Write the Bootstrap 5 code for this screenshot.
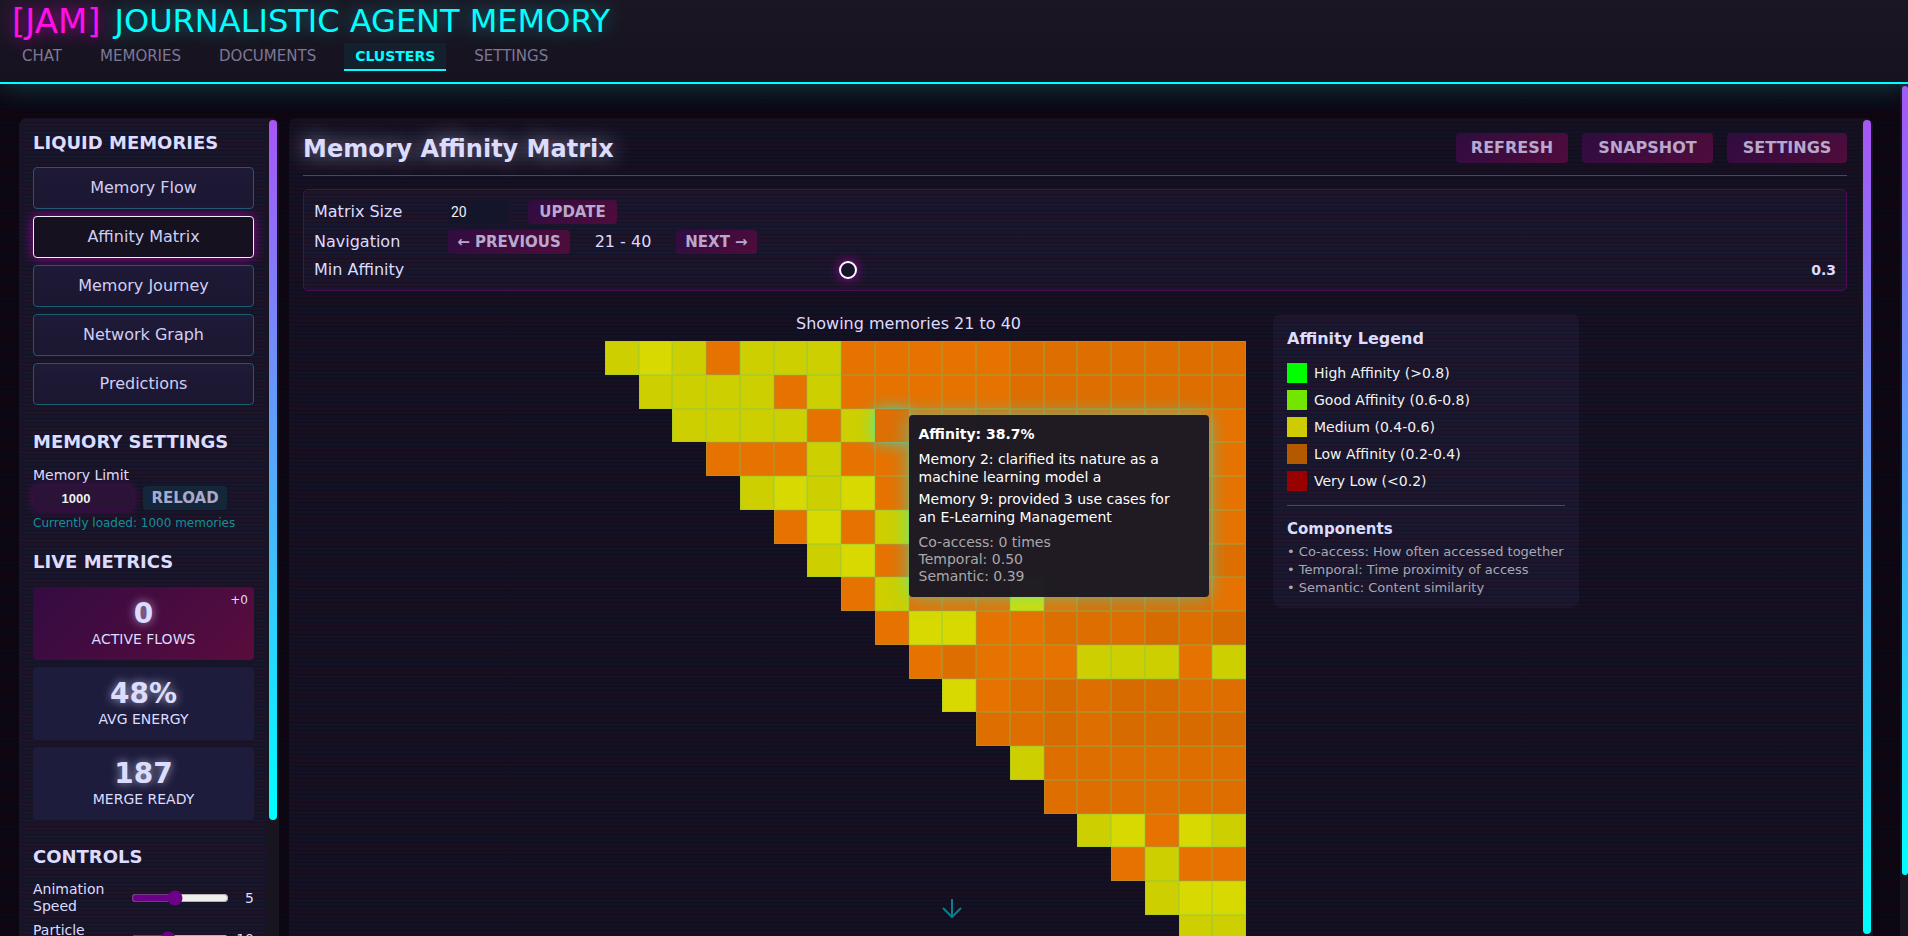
<!DOCTYPE html>
<html lang="en">
<head>
<meta charset="utf-8">
<meta name="viewport" content="width=device-width, initial-scale=1">
<title>JAM - Journalistic Agent Memory</title>
<link href="https://cdn.jsdelivr.net/npm/bootstrap@5.3.0/dist/css/bootstrap.min.css" rel="stylesheet">
<style>
:root{--cyan:#00ffff;--ink:#dcdcff;--teal:#175f70}
body{font-family:"DejaVu Sans",Verdana,sans-serif;font-size:16px;line-height:18px;color:var(--ink);background-color:#0c0612}
body,.side-panel,.main-panel,.filters,.legend-card{background-image:repeating-linear-gradient(180deg,rgba(0,0,0,.18) 0 1px,transparent 1px 4px),repeating-linear-gradient(180deg,rgba(70,0,20,.07) 0 9px,rgba(0,30,60,.07) 13px 22px)}
.app{height:100vh}
.topbar{height:84px;background:linear-gradient(180deg,#1a1723,#161220);border-bottom:2px solid var(--cyan);box-shadow:0 0 30px rgba(0,255,255,.28);padding:5px 12px 0;position:relative;z-index:2}
.brand{font-size:32px;line-height:32px;margin:0;color:var(--cyan);text-shadow:0 0 18px rgba(0,255,255,.45);gap:14px}
.brand b{font-size:34px;font-weight:400;color:#ff10e8;text-shadow:0 0 18px rgba(255,0,230,.75)}
.topnav{gap:18px;margin-top:6px}
.topnav .nav-link{font-size:15px;line-height:26px;height:28px;padding:0 10px;color:#7d7897;border-bottom:2px solid transparent}
.topnav .nav-link.active{color:var(--cyan);background:#13202e;border-color:var(--cyan);font-size:14px;font-weight:700;padding:0 11px}
.stage-area{padding:34px 27px 0 19px;gap:10px}
.side-panel{width:260px;background-color:#19152b;border-radius:8px 8px 0 0}
.side-body{padding:14px 13px 0 14px;min-width:0}
.main-panel{background-color:#141023;border-radius:8px 8px 0 0}
.main-body{padding:14px}
.rail{width:12px;padding:2px;background:#19151f;border-radius:6px 6px 0 0}
.rail-page{width:8px;padding-right:0;border-radius:0;position:relative;z-index:1}
.thumb{border-radius:4px;background:linear-gradient(180deg,#a855f7,var(--cyan))}
.side-title{font-size:18px;line-height:22px;margin:0}
.sec{margin-top:26px}
.sec-2{margin-top:19px}
.views{gap:7px;margin-top:13px}
.view-btn{height:42px;border:1px solid var(--teal);border-radius:4px;background:linear-gradient(180deg,#1e1a37,#1b1731);color:#d0cef2;padding:0}
.view-btn.active{background:#15111f;border-color:#f0eeff;box-shadow:0 0 12px rgba(190,0,190,.75)}
.limit-label{margin-top:13px;font-size:14px}
.limit-row{gap:10px;margin:2px 0 4px}
.limit-input{width:100px;height:24px;border:0;border-radius:4px;background:#2a1336;box-shadow:0 0 8px rgba(140,0,140,.6);color:#eee;font:bold 13px "Liberation Sans",Arial,sans-serif;text-align:center;padding:0 14px 0 0}
.plain{appearance:textfield;-moz-appearance:textfield}
.plain::-webkit-inner-spin-button{display:none}
.neon-btn{height:24px;border:0;border-radius:4px;padding:0;font-size:15px;line-height:18px;font-weight:700;color:#b9a8cd;background:linear-gradient(135deg,#300c40,#4f0c3c)}
.neon-btn.tall{height:30px;font-size:16px}
.reload-btn{width:84px;background:#14263a;color:#a9a9cb}
.note{font-size:12px;color:#138f99}
.metrics{gap:7px;margin-top:14px}
.metric{height:73px;border-radius:4px;background:#1e1c3c;position:relative;text-align:center;padding-top:12px}
.metric.hot{background:linear-gradient(135deg,#340b42,#5a0c3d)}
.metric strong{display:block;font-size:28px;line-height:30px;text-shadow:0 0 10px rgba(220,220,255,.7)}
.metric span{font-size:14px;line-height:20px}
.metric .delta{position:absolute;right:6px;top:3px;font-size:12px}
.ctl-list{gap:7px;margin-top:13px}
.ctl{gap:6px}
.ctl label{width:92px;font-size:14px;line-height:17px}
.ctl input{width:98px;accent-color:#6c0088;margin:0}
.ctl span{font-size:14px}
.panel-head{border-bottom:1px solid var(--teal);height:44px}
.panel-title{font-size:24px;line-height:34px;text-shadow:0 0 20px rgba(220,220,255,.65)}
.head-btns{gap:14px;margin-top:1px}
.w-refresh{width:112px}
.w-snapshot{width:131px}
.w-settings{width:120px}
.filters{border:1px solid #4b0c58;border-radius:5px;background-color:#1a162d;margin-top:13px;padding:10px;height:102px;gap:6px}
.filters .lbl{width:134px}
.filters b{font-size:14px}
.size-input{width:60px;height:24px;border:0;background:#14142a;color:#eee;font:14px Roboto,sans-serif;padding:0 3px}
.upd{width:89px;margin-left:20px}
.prev{width:122px}
.next{width:81px}
.range-text{width:106px;text-align:center}
.ghost{appearance:none;width:97%;height:20px;margin:0;background:transparent}
.ghost::-webkit-slider-thumb{appearance:none;width:18px;height:18px;border-radius:50%;border:2px solid #fff;background:#17132a;box-shadow:0 0 12px rgba(200,0,200,.8)}
.matrix-row{gap:27px;margin-top:23px}
.showing{line-height:20px;margin-bottom:7px}
.matrix{width:675px;display:grid;grid-template-columns:repeat(20,1fr)}
.cell{aspect-ratio:1;position:relative;border:1px solid rgba(110,200,110,.3)}
.void{aspect-ratio:1}
.Y{background-color:#cdcf00}.y{background-color:#d7d900}
.O{background-color:#e67200}.P{background-color:#de6e00}.Q{background-color:#d86b00}
.hovered{border:0;box-shadow:0 0 16px rgba(0,255,255,.7);z-index:3;background-color:#de6f04}
.tip{position:absolute;left:100%;top:6px;width:300px;height:182px;border-radius:4px;background:rgba(28,24,36,.98);box-shadow:0 0 20px rgba(0,255,255,.5);padding:10px;color:#fff;font-size:14px;line-height:18px}
.tip p{margin:0 0 4px}
.tip .tip-head{font-weight:700;margin-bottom:7px}
.tip .dim{color:#aaa8ad;line-height:17px;margin-top:8px}
.legend-card{width:306px;background-color:#1b1730;border-radius:8px;padding:14px;height:294px}
.legend-card h3{font-size:16px;line-height:22px;margin:0 0 13px}
.legend-card h4{font-size:15px;line-height:20px;margin:13px 0 4px}
.swatches{gap:7px}
.key{gap:7px;color:#f2f2f2;font-size:14px;line-height:20px}
.sw{width:20px;height:20px}
.sw-high{background:#00ff00}.sw-good{background:#73e600}.sw-medium{background:#cccc00}.sw-low{background:#b35900}.sw-verylow{background:#990000}
.comp{border-top:1px solid var(--teal);margin-top:14px}
.comp li{font-size:13px;line-height:18px;color:#a9a7b2}
.go-down{position:fixed;left:0;right:4px;bottom:16px;z-index:4;pointer-events:none}
</style>
</head>
<body class="overflow-hidden">
<div class="app d-flex flex-column text-nowrap">
  <header class="topbar flex-shrink-0">
    <h1 class="brand d-flex"><b>[JAM]</b> JOURNALISTIC AGENT MEMORY</h1>
    <nav class="topnav nav">
      <a class="nav-link" href="#">CHAT</a>
      <a class="nav-link" href="#">MEMORIES</a>
      <a class="nav-link" href="#">DOCUMENTS</a>
      <a class="nav-link active" href="#">CLUSTERS</a>
      <a class="nav-link" href="#">SETTINGS</a>
    </nav>
  </header>
  <div class="d-flex flex-grow-1 overflow-hidden">
    <div class="stage-area d-flex flex-grow-1 overflow-hidden">
      <aside class="side-panel d-flex flex-shrink-0 overflow-hidden">
        <div class="side-body flex-grow-1">
          <h2 class="side-title fw-bold">LIQUID MEMORIES</h2>
          <div class="d-grid views">
            <button class="view-btn">Memory Flow</button>
            <button class="view-btn active">Affinity Matrix</button>
            <button class="view-btn">Memory Journey</button>
            <button class="view-btn">Network Graph</button>
            <button class="view-btn">Predictions</button>
          </div>
          <h2 class="side-title fw-bold sec">MEMORY SETTINGS</h2>
          <label class="d-block limit-label" for="limit">Memory Limit</label>
          <div class="d-flex limit-row">
            <input id="limit" class="limit-input plain" type="number" value="1000">
            <button class="neon-btn reload-btn">RELOAD</button>
          </div>
          <div class="note">Currently loaded: 1000 memories</div>
          <h2 class="side-title fw-bold sec-2">LIVE METRICS</h2>
          <div class="d-grid metrics">
            <div class="metric hot"><strong>0</strong><span>ACTIVE FLOWS</span><span class="delta">+0</span></div>
            <div class="metric"><strong>48%</strong><span>AVG ENERGY</span></div>
            <div class="metric"><strong>187</strong><span>MERGE READY</span></div>
          </div>
          <h2 class="side-title fw-bold sec">CONTROLS</h2>
          <div class="ctl-list d-grid">
            <div class="ctl d-flex align-items-center"><label for="speed">Animation<br>Speed</label><input id="speed" type="range" min="1" max="10" value="5"><span class="ms-auto">5</span></div>
            <div class="ctl d-flex align-items-center"><label for="count">Particle<br>Count</label><input id="count" type="range" min="0" max="28" value="10"><span class="ms-auto">10</span></div>
          </div>
        </div>
        <div class="rail flex-shrink-0"><div class="thumb" style="height:86%"></div></div>
      </aside>
      <main class="main-panel d-flex flex-grow-1 overflow-hidden">
        <div class="main-body flex-grow-1">
          <div class="panel-head d-flex justify-content-between align-items-start">
            <h2 class="panel-title fw-bold m-0">Memory Affinity Matrix</h2>
            <div class="d-flex head-btns">
              <button class="neon-btn tall w-refresh">REFRESH</button>
              <button class="neon-btn tall w-snapshot">SNAPSHOT</button>
              <button class="neon-btn tall w-settings">SETTINGS</button>
            </div>
          </div>
          <section class="filters d-flex flex-column">
            <div class="d-flex align-items-center">
              <label class="lbl" for="size">Matrix Size</label>
              <input id="size" class="size-input plain" type="number" value="20">
              <button class="neon-btn upd">UPDATE</button>
            </div>
            <div class="d-flex align-items-center">
              <span class="lbl">Navigation</span>
              <button class="neon-btn prev">← PREVIOUS</button>
              <span class="range-text">21 - 40</span>
              <button class="neon-btn next">NEXT →</button>
            </div>
            <div class="d-flex align-items-center">
              <label class="lbl" for="min">Min Affinity</label>
              <div class="flex-grow-1 d-flex"><input id="min" class="ghost" type="range" min="0" max="100" value="30"></div>
              <b>0.3</b>
            </div>
          </section>
          <div class="matrix-row d-flex justify-content-center align-items-start">
            <div>
              <div class="text-center showing">Showing memories 21 to 40</div>
              <div class="matrix" id="matrix"></div>
            </div>
            <aside class="legend-card">
              <h3 class="fw-bold">Affinity Legend</h3>
              <div class="swatches d-grid">
                <div class="d-flex key"><i class="sw sw-high"></i>High Affinity (&gt;0.8)</div>
                <div class="d-flex key"><i class="sw sw-good"></i>Good Affinity (0.6-0.8)</div>
                <div class="d-flex key"><i class="sw sw-medium"></i>Medium (0.4-0.6)</div>
                <div class="d-flex key"><i class="sw sw-low"></i>Low Affinity (0.2-0.4)</div>
                <div class="d-flex key"><i class="sw sw-verylow"></i>Very Low (&lt;0.2)</div>
              </div>
              <div class="comp">
                <h4 class="fw-bold">Components</h4>
                <ul class="list-unstyled m-0">
                  <li>• Co-access: How often accessed together</li>
                  <li>• Temporal: Time proximity of access</li>
                  <li>• Semantic: Content similarity</li>
                </ul>
              </div>
            </aside>
          </div>
        </div>
        <div class="rail flex-shrink-0"><div class="thumb h-100"></div></div>
      </main>
    </div>
    <div class="rail rail-page flex-shrink-0"><div class="thumb" style="height:93%"></div></div>
  </div>
</div>
<div class="go-down d-flex justify-content-center">
  <svg width="20" height="22" viewBox="0 0 20 22" fill="none" stroke="#087f8c" stroke-width="2"><path d="M10 1v18M1 10l9 9 9-9"/></svg>
</div>
<script src="https://cdn.jsdelivr.net/npm/bootstrap@5.3.0/dist/js/bootstrap.bundle.min.js"></script>
<script>
// One string per matrix row, right-aligned: Y/y medium, O/P/Q low affinity, H the hovered pair.
const rows = [
  "YyYOYYYOOOOOPPPPPPP","YYYYOYOOOOOPPPPPPP","YYYYOYHOOPPPPOOOO","OOOYOOOOPYPPPPOO",
  "YyYyOYYOOPPPPPO","OyOYOOPPPPPPPO","YyOOPPPPPPPPP","OYOOOyOPPPPO","OyyOOPPPQPQ",
  "OPOOOYYYOY","yOPQPQQPP","PPQPQQQQ","YPPPPPP","PPPPPP","YyOyY","OYOO","Yyy","YY","Y"
];
const tip = `<div class="tip text-wrap"><p class="tip-head">Affinity: 38.7%</p>
<p>Memory 2: clarified its nature as a machine learning model a</p>
<p>Memory 9: provided 3 use cases for<br>an E-Learning Management</p>
<div class="dim">Co-access: 0 times<br>Temporal: 0.50<br>Semantic: 0.39</div></div>`;
document.getElementById("matrix").innerHTML = rows.map(r =>
  `<div class="void"></div>`.repeat(20 - r.length) +
  [...r].map(c => c === "H" ? `<div class="cell hovered">${tip}</div>` : `<div class="cell ${c}"></div>`).join("")
).join("");
</script>
</body>
</html>
